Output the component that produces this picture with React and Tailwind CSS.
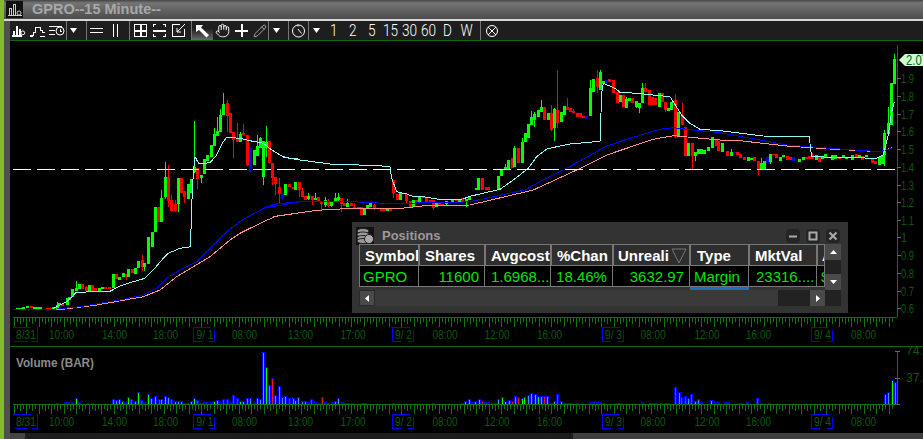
import React from "react";
import { Hand, Pencil } from "lucide-react";

const C = { g: "#00ff00", r: "#ff0000", b: "#0000ff" };
// [x, top, bottom, colour, wickTop, wickBottom] in crop coordinates
const seg7 = [[50,685,690,"g"],[60,685,690,"g"],[70,682,688,"g"],[82,678,685,"g"],[92,679,684,"r"],[102,682,687,"g"],[112,682,687,"g"],[120,682,686,"g"],[140,683,686,"r"],[150,683,688,"r"],[160,680,690,"g"],[170,675,690,"g",665],[178,670,676,"g"],[187,672,677,"r"],[200,655,675,"g"],[208,650,660,"g"],[217,628,650,"g"],[228,625,632,"g",603],[238,612,628,"g"],[247,612,628,"r"],[258,622,632,"r",617],[268,615,635,"g"],[277,615,632,"r"],[286,625,632,"r"],[298,623,635,"g"],[307,622,628,"g"],[316,620,628,"r"],[326,620,628,"r"],[338,583,625,"g"],[347,582,598,"r"],[357,590,600,"g"],[368,580,592,"g"],[377,583,590,"r",583,600],[385,567,590,"g"],[395,567,580,"r"],[405,565,582,"g"],[415,543,565,"g"],[425,540,560,"r",525,572],[433,548,560,"g",548,572],[445,472,552,"g"],[455,456,502,"g"],[465,380,456,"g"],[475,380,425,"r"],[484,354,425,"g",330],[494,292,350,"g",246,358],[503,292,362,"r",255,380],[514,360,393,"r",345],[524,372,393,"r",360,395],[533,295,372,"g",295,395],[542,295,340,"r"],[553,332,352,"r",332,368],[563,312,358,"g"],[572,298,340,"g"],[583,262,275,"g",123,280],[592,265,297,"r",265,327],[602,285,295,"g",285,310],[611,238,282,"g"],[622,225,242,"g"],[632,195,230,"g"],[641,162,198,"g",145],[650,153,167,"g",110],[661,105,155,"g",88],[670,72,105,"g",40],[680,70,108,"r",60,155],[691,100,158,"r"],[700,157,180,"r",157,235],[710,178,186,"r",130],[719,162,187,"g",155],[730,160,165,"r",133],[740,165,255,"r",165,258],[749,200,275,"b"],[761,210,255,"g"],[770,197,228,"g",165],[779,175,205,"g",170],[788,182,292,"g",182,315],[799,185,205,"g",138,230],[808,183,250,"r"],[817,250,295,"r",250,315],[826,292,312,"r",292,345],[838,320,342,"r",295,368],[847,340,358,"b"],[856,312,345,"g"],[868,312,320,"r"],[878,320,328,"r"],[886,306,330,"g"],[896,305,330,"r",305,352]];
const seg10 = [[157,273,290,"r",265,292],[166,288,300,"r"],[175,288,298,"g",280,300],[185,288,300,"r",288,315],[195,293,300,"g",280],[205,292,303,"r"],[214,303,312,"r",303,330],[226,300,315,"g",292,320],[235,302,318,"r",298,322],[244,302,318,"g",302,322],[254,293,303,"g",280],[265,292,300,"g",280,305],[274,293,312,"r",293,335],[283,308,318,"r"],[292,310,320,"g",297],[304,308,318,"r"],[313,320,325,"r",310],[324,322,328,"r"],[334,322,345,"r"],[343,324,345,"g"],[352,315,327,"g"],[361,308,322,"g"],[373,315,325,"r",312,330],[392,324,332,"r"],[401,324,332,"r"],[411,326,332,"g"],[421,324,332,"r"],[430,240,278,"r",240,295],[441,282,300,"r"],[451,280,300,"g",276],[469,282,303,"r",282,308],[481,303,322,"r"],[490,300,322,"g"],[499,300,305,"r"],[508,292,305,"g"],[520,288,294,"r"],[529,292,305,"r"],[539,300,305,"r"],[550,300,325,"r",300,330],[559,310,322,"g"],[568,310,318,"r"],[577,313,318,"r"],[589,303,312,"g",303,315],[607,298,305,"g"],[618,300,304,"r"],[628,298,305,"g"],[637,295,305,"r"],[647,298,302,"g",298,320],[656,290,300,"g"]];
const seg8 = [[47,385,390,"g"],[55,353,390,"g"],[67,353,390,"r"],[77,380,390,"r"],[85,382,390,"r"],[115,347,390,"g"],[124,330,347,"g"],[135,320,330,"g",313],[145,300,328,"g"],[155,295,323,"r"],[163,265,322,"g",258],[174,265,310,"r"],[185,245,310,"g",235],[195,220,245,"g"],[205,192,235,"g"],[214,172,195,"g",152],[223,162,180,"g",155,200],[233,150,170,"g"],[244,140,155,"g",120],[253,140,180,"r"],[263,158,180,"g"],[272,160,210,"r",135,212],[283,148,205,"g",143,242],[292,150,190,"r",30,205],[302,155,185,"g"],[313,138,165,"g"],[322,140,150,"r",113],[331,145,155,"r"],[340,153,158,"r",147,160],[352,158,170,"r"],[361,160,170,"r"],[370,168,175,"r"],[378,168,176,"b"],[391,85,167,"g",60],[400,57,95,"g"],[410,55,80,"r",30,100],[421,37,90,"g",30],[430,63,72,"g"],[438,60,68,"b"],[448,57,66,"r"],[460,60,98,"r"],[470,95,130,"r"],[479,105,125,"g"],[488,105,142,"r"],[499,118,145,"g",112],[508,115,122,"g"],[517,115,130,"r"],[528,122,140,"g",122,145],[538,130,145,"g",130,158],[547,85,130,"g",70],[556,85,95,"r",70],[567,90,135,"r"],[576,112,135,"r"],[585,115,135,"r"],[596,100,142,"g"],[605,100,125,"r"],[615,125,150,"r",125,155],[625,143,152,"g"],[634,125,150,"g"],[645,120,230,"r",102,235],[655,155,228,"g"],[665,165,195,"r",130],[675,200,288,"r"],[685,250,288,"g"],[695,250,288,"r",250,330],[705,277,288,"g",277,302],[714,267,282,"g"],[723,267,282,"g"],[733,270,282,"g"],[745,262,272,"g"],[755,232,265,"g"],[767,240,258,"r"],[775,242,272,"r"]];
const seg9 = [[5,310,335,"g"],[22,333,347,"r"],[33,335,347,"g",328],[43,335,340,"b"],[52,335,345,"r"],[61,342,355,"r"],[73,350,360,"r"],[83,352,362,"g"],[93,354,360,"g"],[103,350,362,"r"],[113,362,388,"r",362,404],[122,370,388,"g",354],[131,362,388,"g"],[141,350,368,"b"],[151,342,365,"g",342,372],[160,342,345,"r"],[169,343,355,"r"],[180,352,362,"g"],[190,345,352,"g"],[200,348,360,"r"],[209,350,360,"r"],[218,350,362,"b"],[238,358,365,"g"],[250,350,360,"g"],[258,350,358,"r"],[268,348,358,"r"],[277,345,358,"r",340],[288,345,360,"g"],[298,350,365,"r"],[307,350,358,"g"],[316,342,352,"g"],[335,345,360,"g"],[345,345,358,"g"],[358,350,356,"r"],[368,346,352,"g"],[378,352,356,"g"],[397,345,360,"g"],[407,342,352,"r"],[417,345,352,"g"],[425,348,360,"r"],[437,345,350,"g"],[455,357,368,"r"],[466,362,372,"r"],[476,350,375,"g"],[485,345,372,"g"],[493,280,345,"g",270,378],[505,250,282,"g",200],[514,130,255,"g"],[523,58,132,"g",42]];

const conv = (list, ox, oy) => list.map(([x, t, b, c, wt, wb]) => ({
  x: Math.round(ox + x / 3), t: Math.round(oy + t / 3), b: Math.round(oy + b / 3), c,
  wt: wt === undefined ? Math.round(oy + t / 3) : Math.round(oy + wt / 3),
  wb: wb === undefined ? Math.round(oy + b / 3) : Math.round(oy + wb / 3),
}));
const candles = [...conv(seg7, 0, 80), ...conv(seg10, 250, 100), ...conv(seg8, 460, 60).filter(c => c.x > 469), ...conv(seg9, 720, 40)];

const poly = (pts, ox, oy) => pts.map(([x, y]) => `${(ox + x / 3).toFixed(1)},${(oy + y / 3).toFixed(1)}`).join(" ");
const cyan = poly([[160,685],[200,665],[217,650],[228,637],[330,634],[360,618],[400,605],[435,595],[470,558],[490,535],[505,520],[540,505],[572,500],[574,400],[580,280],[585,230],[597,252],[630,248],[650,225],[670,185],[680,172],[720,175],[750,182],[790,190],[815,210],[850,230],[880,237],[900,238]], 0, 80)
 + " " + poly([[100,172],[150,180],[240,192],[385,197],[420,200],[425,235],[440,275],[470,282],[490,290],[520,290],[565,298],[640,297],[655,290]], 250, 100)
 + " " + poly([[120,388],[160,360],[205,325],[230,290],[262,266],[330,252],[420,244],[425,100],[430,70],[465,85],[480,97],[530,100],[630,110],[665,165],[690,190],[720,208],[780,212]], 460, 60)
 + " " + poly([[65,280],[130,288],[268,290],[272,330],[275,350],[470,355],[490,345],[505,285],[515,215],[523,185]], 720, 40);
const blue = poly([[40,688],[170,687],[240,680],[300,670],[360,660],[430,645],[470,625],[500,595],[540,570],[590,545],[620,515],[680,455],[730,418],[800,380],[830,372],[900,365]], 0, 80)
 + " " + poly([[40,325],[70,313],[130,307],[170,304],[310,305],[385,309],[440,310],[620,307],[660,305]], 250, 100)
 + " " + poly([[195,390],[240,365],[320,325],[440,258],[500,238],[600,208],[640,203],[720,212],[780,218]], 460, 60)
 + " " + poly([[100,296],[200,315],[330,325],[480,335],[520,323]], 720, 40);
const pink = poly([[170,690],[290,675],[430,650],[480,630],[530,590],[630,530],[690,480],[720,460],[790,425],[830,408],[900,398]], 0, 80)
 + " " + poly([[70,350],[200,331],[310,325],[455,325],[515,318],[660,315]], 250, 100)
 + " " + poly([[220,390],[350,330],[440,285],[580,238],[640,227],[780,240]], 460, 60)
 + " " + poly([[60,302],[200,318],[330,327],[480,335],[520,322]], 720, 40);

const AX = "#0d760d", LBL = "#0a5a0a";
const xLabels = [[26,"8/31",20],[61.5,"10:00"],[114.5,"14:00"],[165.5,"18:00"],[205,"9/ 1",17],[244.5,"08:00"],[300.5,"13:00"],[353,"17:00"],[403.5,"9/ 2",17],[445,"08:00"],[497,"12:00"],[549.5,"16:00"],[613.5,"9/ 3",17],[653,"08:00"],[707,"12:00"],[758.5,"16:00"],[822.5,"9/ 4",17],[863.5,"08:00"]];
const boxes = [193, 392, 602, 811];

function TimeAxis({ y, labelY, boxTop }) {
  const ticks = [];
  for (let i = 0; i < 282; i++) {
    const x = Math.round(13.5 + i * 3.125) + 0.5;
    ticks.push(<line key={i} x1={x} x2={x} y1={y} y2={y + (i % 4 === 0 ? 10 : i % 2 === 0 ? 7 : 5)} stroke={AX} />);
  }
  return (
    <g>
      <line x1="13" x2="897" y1={y + 0.5} y2={y + 0.5} stroke={AX} shapeRendering="crispEdges" />
      <g shapeRendering="crispEdges">{ticks}</g>
      {xLabels.map(([x, t, w], i) => (
        <text key={i} x={x} y={labelY} textAnchor="middle" fontSize="13" fill={LBL} textLength={w || 25} lengthAdjust="spacingAndGlyphs">{t}</text>
      ))}
      <path shapeRendering="crispEdges" fill="none" stroke="#0000ff" d={`M13 ${boxTop + .5}h18 M37.5 ${boxTop}v14.5h-6 M15 ${boxTop + 14.5}h13`} />
      {boxes.map(l => (
        <path key={l} shapeRendering="crispEdges" fill="none" stroke="#0000ff"
          d={`M${l + .5} ${boxTop + 14.5}V${boxTop + .5}h17 M${l + 21.5} ${boxTop + 3}v11.5h-6 M${l + .5} ${boxTop + 14.5}h8`} />
      ))}
    </g>
  );
}

function PriceChart() {
  const yLabels = [["1.9",78],["1.8",96],["1.7",114],["1.6",131],["1.5",149],["1.4",167],["1.3",185],["1.2",202],["1.1",220],["1",237],["0.9",255],["0.8",273],["0.7",291],["0.6",308]];
  let d = [];
  for (let x = 13; x < 893; x += 24) d.push(`M${x} 169.5h18`);
  return (
    <svg width="913" height="305" viewBox="10 41 913 305" className="block">
      <g shapeRendering="crispEdges">
        {candles.map((c, i) => (
          <g key={i}>
            <line x1={c.x + .5} x2={c.x + .5} y1={c.wt} y2={c.wb} stroke={C[c.c]} />
            <rect x={c.x - 1} y={c.t} width="3" height={Math.max(1, c.b - c.t)} fill={C[c.c]} />
          </g>
        ))}
        <polyline points={pink} fill="none" stroke="#ff8f8f" />
        <polyline points={blue} fill="none" stroke="#0000ff" />
        <polyline points={cyan} fill="none" stroke="#8ffcfc" />
        <path d={d.join("")} stroke="#fff" />
      </g>
      <line x1="897.5" x2="897.5" y1="45" y2="317" stroke={AX} />
      {yLabels.map(([t, y]) => (
        <g key={t}>
          <line x1="897" x2="901" y1={y + .5} y2={y + .5} stroke="#666" shapeRendering="crispEdges" />
          <text x="901" y={y + 4.5} fontSize="13" fill={LBL} textLength={t.length === 1 ? 6 : 13} lengthAdjust="spacingAndGlyphs">{t}</text>
        </g>
      ))}
      <polygon points="899,60 905,54 923,54 923,66 905,66" fill="#ccffcc" />
      <text x="906" y="65" fontSize="14" fill="#063" textLength="22" lengthAdjust="spacingAndGlyphs">2.07</text>
      <TimeAxis y={317} labelY={338.5} boxTop={327} />
    </svg>
  );
}

const vol5 = [[228,265,"g"],[238,275,"b"],[195,276,"b"],[205,276,"b"],[215,276,"b"],[170,280,"b"],[265,278,"b"],[275,278,"b"],[338,268,"b"],[347,270,"b"],[356,268,"g"],[365,272,"g"],[375,275,"b"],[385,262,"g"],[394,267,"r"],[404,272,"g"],[415,246,"g"],[424,271,"r"],[433,277,"b"],[445,252,"g"],[454,263,"g"],[464,258,"g"],[476,268,"r"],[484,268,"g"],[494,258,"g"],[503,262,"b"],[514,268,"r"],[524,274,"b"],[533,274,"b"],[543,274,"b"],[553,278,"b"],[562,278,"b"],[572,274,"g"],[583,265,"g"],[592,270,"r"],[602,280,"b"],[612,276,"b"],[622,276,"b"],[632,276,"b"],[642,273,"g"],[650,270,"g"],[660,275,"b"],[670,268,"r"],[680,268,"r"],[691,275,"b"],[700,256,"r"],[710,263,"r"],[719,274,"g"],[730,272,"b"],[740,265,"b"],[750,265,"b"],[761,275,"g"],[770,263,"g"],[779,268,"b"],[788,125,"g"],[799,172,"g"],[808,226,"b"],[817,203,"r"],[826,256,"b"],[838,228,"b"],[847,262,"b"],[856,258,"g"],[868,265,"r"],[878,265,"b"],[886,270,"g"]];
const vol11 = [[8,155,"b"],[22,167,"b"],[30,167,"b"],[40,170,"b"],[49,163,"r"],[61,170,"b"],[71,173,"b"],[80,157,"r"],[91,170,"b"],[100,174,"b"],[110,170,"b"],[119,167,"b"],[130,160,"b"],[140,172,"b"],[150,175,"b"],[158,175,"b"],[170,174,"b"],[200,174,"b"],[210,174,"b"],[295,174,"b"],[415,174,"b"],[502,175,"b"],[511,167,"g"],[522,163,"g"],[532,172,"b"],[541,167,"b"],[551,161,"g"],[561,167,"r"],[571,170,"r"],[580,172,"b"],[590,175,"b"],[600,175,"b"],[610,163,"b"],[620,157,"g"],[631,168,"g"],[641,164,"g"],[650,167,"r"],[659,152,"b"],[670,157,"r"],[680,160,"g"],[688,157,"g"],[700,150,"b"],[709,143,"g"],[719,146,"g"],[729,152,"g"],[739,152,"g"],[748,154,"r"],[757,152,"g"],[768,174,"b"],[778,168,"b"],[787,148,"r"],[797,167,"b"],[808,175,"b"],[817,175,"b"],[825,175,"b"],[847,175,"b"],[885,172,"b"],[895,172,"b"],[905,172,"b"],[915,172,"b"],[925,175,"b"],[965,175,"b"],[975,175,"b"]];
const vol6 = [[58,277,"b"],[80,280,"b"],[90,280,"b"],[100,280,"b"],[115,280,"b"],[125,280,"b"],[135,280,"b"],[157,232,"r"],[167,247,"b"],[175,262,"r"],[187,257,"r"],[196,265,"b"],[205,253,"r"],[216,272,"g"],[226,268,"b"],[235,277,"b"],[265,271,"g"],[275,277,"b"],[285,277,"b"],[305,277,"b"],[315,277,"b"],[352,278,"b"],[373,277,"b"],[403,265,"r"],[413,280,"b"],[437,280,"b"],[785,253,"b"],[796,245,"b"],[806,210,"g"],[815,217,"b"]];
const bars = [
  ...vol5.map(([x, t, c]) => [Math.round(x / 3), Math.round(404 - (282 - t) / 3), c]),
  ...vol11.map(([x, t, c]) => [Math.round(295 + x / 3), Math.round(404 - (177 - t) / 3), c]),
  ...vol6.map(([x, t, c]) => [Math.round(623 + x / 3), Math.round(404 - (282 - t) / 3), c]),
];
const centre = { g: "#00ff00", r: "#ff1010", b: "#4a8cff" };

function VolumeChart() {
  return (
    <svg width="913" height="86" viewBox="10 347 913 86" className="block">
      <text x="16" y="366.5" fontSize="13" fontWeight="700" fill="#8a8a8a" textLength="78" lengthAdjust="spacingAndGlyphs">Volume (BAR)</text>
      <g shapeRendering="crispEdges">
        {bars.map(([x, y, c], i) => (
          <g key={i}>
            <rect x={x - 1} y={y} width="3" height={404 - y} fill="#0000ff" />
            {404 - y > 2 && <rect x={x} y={y + 1} width="1" height={403 - y} fill={centre[c]} />}
          </g>
        ))}
      </g>
      <line x1="897.5" x2="897.5" y1="351" y2="404" stroke={AX} />
      <path d="M895 351.5h5 M895 378.5h5 M895 404.5h5" stroke="#666" shapeRendering="crispEdges" />
      <text x="906" y="355" fontSize="13" fill={LBL} textLength="24" lengthAdjust="spacingAndGlyphs">74.4</text>
      <text x="906" y="382" fontSize="13" fill={LBL} textLength="24" lengthAdjust="spacingAndGlyphs">37.2</text>
      <TimeAxis y={404} labelY={426} boxTop={414} />
    </svg>
  );
}

const S = ({ children }) => (
  <svg width="19" height="19" viewBox="0 0 19 19" fill="none" stroke="#fff" strokeWidth="1" shapeRendering="crispEdges">{children}</svg>
);
const Sep = () => <div className="h-[19px] w-px shrink-0 bg-[#777]" />;
const Caret = () => (
  <svg width="7" height="5" viewBox="0 0 7 5"><polygon points="0,0 7,0 3.5,5" fill="#fff" /></svg>
);
const Tf = ({ children }) => (
  <div className="flex w-[19px] items-center justify-center">
    <span className="inline-block scale-x-[0.8] font-['Roboto'] text-[17px] font-light leading-none text-white">{children}</span>
  </div>
);

function Toolbar() {
  return (
    <div className="flex h-5 shrink-0 items-center border-b border-[#0b6b0b] bg-[#1e1e1e]">
      <div className="flex w-[18px] justify-center"><S><path d="M2 15h11M4.500 14v-4M7.500 14V5M10.500 14V8" strokeWidth="2" /><circle cx="13.500" cy="12" r="2" shapeRendering="auto" /></S></div>
      <div className="flex w-[19px] justify-center"><S><path d="M2 14.500h3v-3h2v-5h5v3h2v2h3M2 15.500h3M12 15.500h5" /></S></div>
      <div className="flex w-[19px] justify-center"><S><path d="M2 5.500h13M2 9.500h6M2 13.500h6" /><circle cx="13" cy="10" r="4" shapeRendering="auto" /><path d="M13 8v2h2" /></S></div>
      <Sep />
      <div className="mr-[6px] flex w-[13px] justify-center"><Caret /></div>
      <Sep />
      <div className="flex w-[19px] justify-center"><S><path d="M3 7.500h13M3 11.500h13" /></S></div>
      <div className="mr-[4px] flex w-[19px] justify-center"><S><path d="M7.500 3v13M11.500 3v13" /></S></div>
      <Sep />
      <div className="ml-px flex w-[19px] justify-center"><S><rect x="3.500" y="3.500" width="12" height="12" /><path d="M4 9.500h11M9.500 4v11" strokeWidth="2" /></S></div>
      <div className="flex w-[19px] justify-center"><S><path d="M6 3.500H3.500V6M13 3.500h2.500V6M6 15.500H3.500V13M13 15.500h2.500V13" /><path d="M3 9.500h13" strokeWidth="2" /></S></div>
      <div className="mr-[3px] flex w-[19px] justify-center"><S><path d="M11 3.500H3.500V15.500H15.500V8" /><path d="M16 3l-8 8M8 7v4h4" shapeRendering="auto" /></S></div>
      <Sep />
      <div className="flex h-[19px] w-[21px] items-center justify-center bg-gradient-to-b from-[#1e1e1e] from-40% to-[#6a6a6a]">
        <svg width="15" height="14" viewBox="0 0 15 14"><polygon points="1,1 8,1 6,3.500 14,11 11.500,13.500 4,6 1,8" fill="#fff" /></svg>
      </div>
      <div className="flex w-[19px] justify-center"><Hand size={15} color="#fff" strokeWidth={1.5} /></div>
      <div className="flex w-[19px] justify-center"><S><path d="M3 9.500h13M9.500 3v13" strokeWidth="2" /></S></div>
      <div className="flex w-[17px] justify-center"><Pencil size={14} color="#fff" strokeWidth={1} /></div>
      <Sep />
      <div className="mr-[5px] flex w-[14px] justify-center"><Caret /></div>
      <Sep />
      <div className="flex w-[19px] justify-center"><S><g shapeRendering="auto"><circle cx="9.500" cy="10" r="6" /><path d="M9 8l3.500 4.500M9 3.500v2" /></g></S></div>
      <Sep />
      <div className="flex w-[15px] justify-center"><Caret /></div>
      <Tf>1</Tf><Tf>2</Tf><Tf>5</Tf><Tf>15</Tf><Tf>30</Tf><Tf>60</Tf><Tf>D</Tf><Tf>W</Tf>
      <div className="w-1" />
      <Sep />
      <div className="flex w-[21px] justify-center"><S><g shapeRendering="auto"><circle cx="10" cy="10" r="5.500" /><path d="M6 6l8 8M14 6l-8 8" /></g></S></div>
    </div>
  );
}

const hdr = "flex h-[22px] items-center overflow-hidden whitespace-nowrap border border-[#777] bg-[#2e2e2e] text-[15px] font-bold leading-none text-white";
const cell = "flex h-[21px] items-center overflow-hidden whitespace-nowrap border-r border-b border-[#777] bg-black text-[15px] leading-none text-[#00e400]";

function Positions() {
  return (
    <div className="absolute left-[342px] top-[181px] flex h-[91px] w-[496px] flex-col bg-[#333] px-[7px]">
      <div className="flex h-[22px] shrink-0 items-center pt-[5px]">
        <div className="-ml-[3px] flex h-[18px] w-[18px] items-center justify-center bg-[#111]">
          <svg width="18" height="18" viewBox="0 0 18 18" fill="#999" stroke="#222"><ellipse cx="7" cy="4" rx="6" ry="2.500" /><ellipse cx="7" cy="7.500" rx="6" ry="2.500" /><ellipse cx="7" cy="11" rx="6" ry="2.500" /><ellipse cx="7" cy="14" rx="6" ry="2.500" /><circle cx="13" cy="12" r="4.500" fill="#aaa" /></svg>
        </div>
        <span className="ml-[8px] text-[13px] font-bold text-[#9a9a9a]">Positions</span>
        <div className="ml-auto mr-px flex gap-[6px]">
          {[
            <path key="a" d="M3 7.500h8" strokeWidth="2" />,
            <rect key="b" x="3.500" y="3.500" width="7" height="7" strokeWidth="2" />,
            <path key="c" d="M3.500 3.500l7 7M10.500 3.500l-7 7" strokeWidth="2" />,
          ].map((g, i) => (
            <div key={i} className="flex h-[14px] w-[14px] items-center justify-center rounded-sm bg-[#252525]">
              <svg width="14" height="14" viewBox="0 0 14 14" fill="none" stroke="#aaa">{g}</svg>
            </div>
          ))}
        </div>
      </div>
      <div className="flex">
        <div className="w-[466px] shrink-0">
          <div className="grid grid-cols-[60px_66px_66px_62px_77px_59px_68px_8px]">
            <div className={hdr + " pl-[5px]"}>Symbol</div>
            <div className={hdr + " pl-[5px]"}>Shares</div>
            <div className={hdr + " pl-[5px]"}>Avgcost</div>
            <div className={hdr + " pl-[5px]"}>%Chan</div>
            <div className={hdr + " relative pl-[4px]"}>
              Unreali
              <svg className="absolute right-[2px] top-[3px]" width="16" height="16" viewBox="0 0 16 16" fill="#2e2e2e" stroke="#777"><polygon points="1,1 15,1 8,15" /></svg>
            </div>
            <div className={hdr + " pl-[6px]"}>Type</div>
            <div className={hdr + " pl-[5px]"}>MktVal</div>
            <div className={hdr + " pl-[4px]"}>A</div>
            <div className={cell + " border-l pl-[3px]"}>GPRO</div>
            <div className={cell + " justify-end pr-[5px]"}>11600</div>
            <div className={cell + " pl-[6px]"}>1.6968...</div>
            <div className={cell + " justify-center"}>18.46%</div>
            <div className={cell + " justify-end pr-[5px]"}>3632.97</div>
            <div className={cell + " pl-[4px]"}>Margin</div>
            <div className={cell + " pl-[7px]"}>23316....</div>
            <div className={cell + " pl-[4px]"}>$</div>
          </div>
          <div className="ml-[331px] h-[3px] w-[59px] bg-[#1a6fc0]" />
          <div className="flex h-[16px] bg-[#3a3a3a]">
            <div className="flex w-[16px] items-center justify-center border border-[#2a2a2a] bg-[#4a4a4a]">
              <svg width="4" height="7" viewBox="0 0 4 7"><polygon points="4,0 4,7 0,3.500" fill="#fff" /></svg>
            </div>
            <div className="flex-1" />
            <div className="w-[32px] bg-[#222]" />
            <div className="flex w-[15px] items-center justify-center bg-[#4a4a4a]">
              <svg width="4" height="7" viewBox="0 0 4 7"><polygon points="0,0 0,7 4,3.500" fill="#fff" /></svg>
            </div>
          </div>
        </div>
        <div className="flex w-[16px] flex-col bg-[#222]">
          <div className="flex h-[16px] items-center justify-center bg-[#4a4a4a]">
            <svg width="7" height="4" viewBox="0 0 7 4"><polygon points="0,4 7,4 3.500,0" fill="#fff" /></svg>
          </div>
          <div className="h-[14px]" />
          <div className="flex h-[16px] items-center justify-center bg-[#4a4a4a]">
            <svg width="7" height="4" viewBox="0 0 7 4"><polygon points="0,0 7,0 3.500,4" fill="#fff" /></svg>
          </div>
        </div>
      </div>
    </div>
  );
}

export default function App() {
  return (
    <div className="flex h-[439px] w-[923px] overflow-hidden bg-black font-['Liberation_Sans',sans-serif]">
      <div className="w-1 shrink-0 bg-[#84bb2a]" />
      <div className="flex min-w-0 flex-1 flex-col">
        <div className="flex h-[21px] shrink-0 items-center border-b-2 border-[#d8d8d8] bg-gradient-to-b from-[#444] via-[#757575] via-15% to-[#4c4c4c] pl-[2px]">
          <div className="flex h-[17px] w-[17px] items-center justify-center bg-[#111]">
            <svg width="17" height="17" viewBox="0 0 17 17" fill="none" stroke="#ccc" shapeRendering="crispEdges"><path d="M1.500 14.500h14M3.500 14V7h2v7M7.500 14V3h2v11" /><circle cx="13" cy="12" r="2" shapeRendering="auto" /></svg>
          </div>
          <span className="ml-[9px] text-[14.5px] font-bold leading-none text-[#a8a8a8]">GPRO--15 Minute--</span>
        </div>
        <div className="flex min-h-0 flex-1">
          <div className="w-1.5 shrink-0 bg-[#505050]" />
          <div className="flex min-w-0 flex-1 flex-col">
            <Toolbar />
            <div className="relative shrink-0">
              <PriceChart />
              <Positions />
            </div>
            <div className="h-px shrink-0 bg-[#0b6b0b]" />
            <VolumeChart />
            <div className="flex h-[6px] shrink-0">
              <div className="w-[15px] bg-[#444]" />
              <div className="w-[548px] bg-[#1c1c1c]" />
              <div className="flex-1 bg-[#3e3e3e]" />
            </div>
          </div>
        </div>
      </div>
    </div>
  );
}
